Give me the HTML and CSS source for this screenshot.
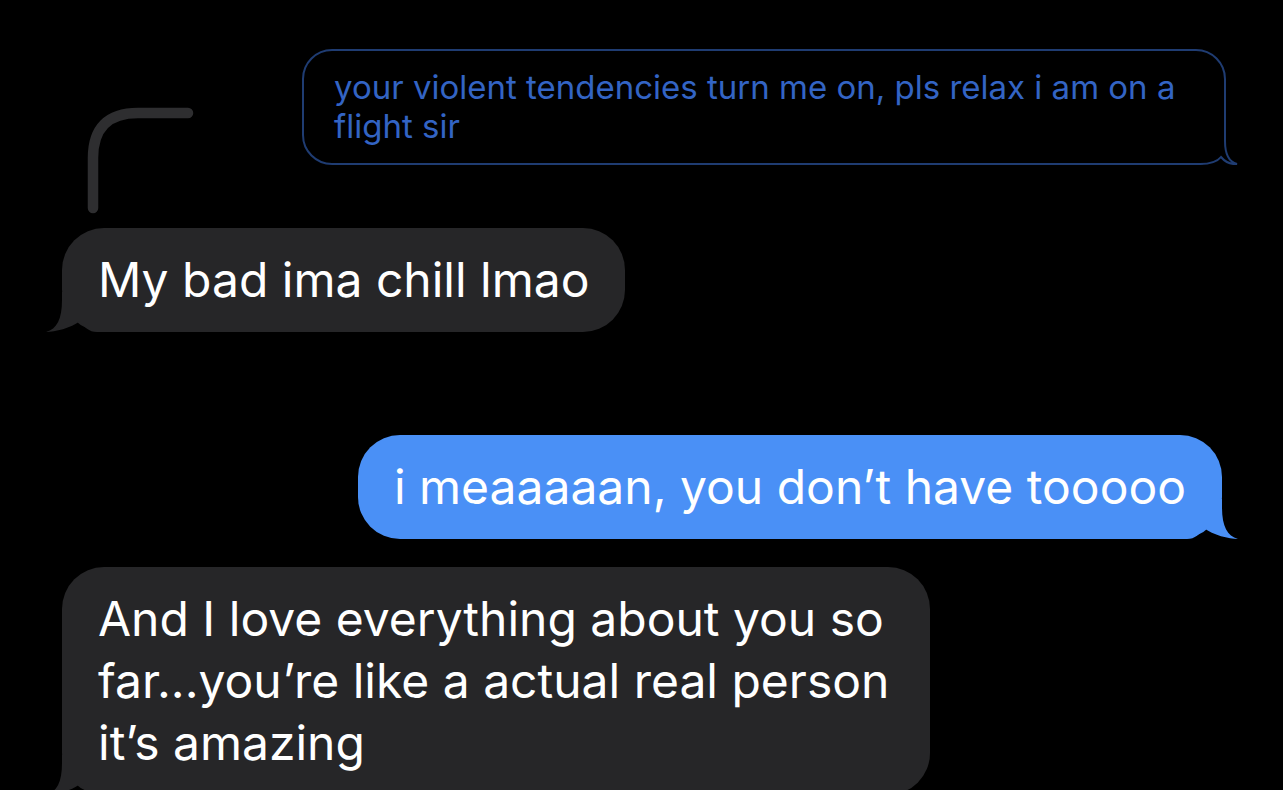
FILE: index.html
```html
<!DOCTYPE html>
<html lang="en">
<head>
  <meta charset="UTF-8">
  <meta name="viewport" content="width=device-width, initial-scale=1.0">
  <title>Messages</title>
  <link rel="stylesheet" href="styles.css">
</head>
<body>

  <div class="chat">
    <!-- reply thread line -->
    <svg class="reply-line" width="120" height="120" viewBox="0 0 120 120">
      <path d="M13 108 V58 Q13 13 58 13 H108" fill="none" stroke="currentColor" stroke-width="10.5" stroke-linecap="round"/>
    </svg>

    <div class="row out">
      <div class="bubble quote">
        <svg class="tail" width="42" height="30" viewBox="0 0 42 30">
          <path d="M0 0 H29 V6 C29 20 33 27 42 29.5 C36 30 30 28 25 22 C21 27 14 29 4 29 H0 Z" fill="#000"/>
          <path d="M29 0 V6 C29 20 33 27 41 29 C36 29.5 30 28 25 22 C21 27 14 29 4 29 H0" fill="none" stroke="currentColor" stroke-width="2"/>
        </svg>
        <span class="text">your violent tendencies turn me on, pls relax i am on a flight sir</span>
      </div>
    </div>

    <div class="row in first">
      <div class="bubble gray">
        <svg class="tail" width="58" height="40" viewBox="0 0 58 40">
          <path d="M0 0 H42 V8 C42 27 47 37 58 40 C49 40 33 36 24 29 C20 35 15 40 7 40 H0 Z" fill="currentColor"/>
        </svg>
        <span class="text">My bad ima chill lmao</span>
      </div>
    </div>

    <div class="row out second">
      <div class="bubble blue">
        <svg class="tail" width="58" height="40" viewBox="0 0 58 40">
          <path d="M0 0 H42 V8 C42 27 47 37 58 40 C49 40 33 36 24 29 C20 35 15 40 7 40 H0 Z" fill="currentColor"/>
        </svg>
        <span class="text">i meaaaaan, you don’t have tooooo</span>
      </div>
    </div>

    <div class="row in third">
      <div class="bubble gray wide">
        <svg class="tail" width="58" height="40" viewBox="0 0 58 40">
          <path d="M0 0 H42 V8 C42 27 47 37 58 40 C49 40 33 36 24 29 C20 35 15 40 7 40 H0 Z" fill="currentColor"/>
        </svg>
        <span class="text">And I love everything about you so far...you’re like a actual real person it’s amazing</span>
      </div>
    </div>
  </div>

</body>
</html>
```

FILE: styles.css
```css
* { margin: 0; padding: 0; box-sizing: border-box; }
body { background: #000; font-family: "Inter", "Noto Sans", sans-serif; overflow: hidden; }

.chat {
  position: relative;
  display: flex;
  flex-direction: column;
  padding: 49px 61px 0 62px;
}
.reply-line {
  position: absolute;
  left: 80px;
  top: 100px;
  color: #2e2e30;
}

.row { display: flex; }
.row.out { justify-content: flex-end; }
.row.in { justify-content: flex-start; }
.row.first { margin-top: 63px; }
.row.second { margin-top: 103px; }
.row.third { margin-top: 28px; }

.bubble {
  position: relative;
  max-width: 868px;
  padding: 21px 36px;
  border-radius: 42px;
  font-size: 48px;
  line-height: 62px;
  color: #fff;
}
.bubble .text { position: relative; }
.bubble .tail {
  position: absolute;
  bottom: 0;
}
.bubble.gray { background: #262628; }
.bubble.gray .tail { left: -16px; transform: scaleX(-1); color: #262628; }
.bubble.blue { background: #4a90f6; }
.bubble.blue .tail { right: -16px; color: #4a90f6; }
.bubble.wide { width: 868px; }

.bubble.quote {
  width: 924px;
  max-width: none;
  margin-right: -4px;
  padding: 17px 30px;
  border: 2px solid #1f3c72;
  border-radius: 30px;
  font-size: 33px;
  line-height: 39px;
  color: #3364c4;
}
.bubble.quote .tail {
  right: -14px;
  bottom: -2px;
  color: #1f3c72;
}
```
